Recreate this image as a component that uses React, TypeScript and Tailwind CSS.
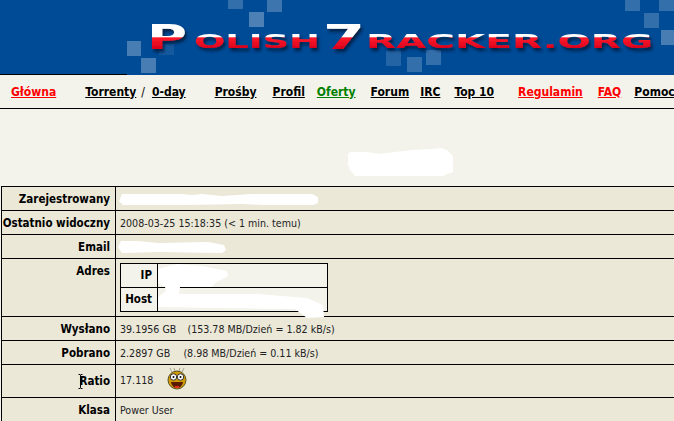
import type { ReactNode } from 'react'

const font = { fontFamily: '"DejaVu Sans Condensed", "DejaVu Sans", sans-serif' }

const squares = [
  [127, 41, 14, 15, 0.28],
  [141, 58, 15, 15, 0.28],
  [159, 44, 15, 11, 0.08],
  [228, 0, 15, 9, 0.2],
  [249, 12, 15, 15, 0.3],
  [267, 0, 15, 12, 0.24],
  [386, 51, 15, 15, 0.14],
  [407, 57, 15, 15, 0.2],
  [426, 50, 15, 15, 0.2],
  [625, 0, 15, 11, 0.2],
  [644, 13, 15, 15, 0.2],
  [659, 0, 15, 11, 0.2],
  [661, 30, 13, 15, 0.28],
]

const Banner = () => (
  <svg width="674" height="75" className="block bg-[#004b96]">
    <defs>
      <linearGradient id="flag" gradientUnits="userSpaceOnUse" x1="0" y1="25" x2="0" y2="49">
        <stop offset="0.5" stopColor="#ffffff" />
        <stop offset="0.53" stopColor="#ff1a2a" />
        <stop offset="1" stopColor="#d8001c" />
      </linearGradient>
      <filter id="shade" x="-5%" y="-30%" width="110%" height="170%">
        <feDropShadow dx="2" dy="3" stdDeviation="1.5" floodColor="#001a40" floodOpacity="0.9" />
      </filter>
    </defs>
    {squares.map(([x, y, w, h, o]) => (
      <rect key={`${x}-${y}`} x={x} y={y} width={w} height={h} fill="#ffffff" opacity={o} />
    ))}
    <g filter="url(#shade)" fill="url(#flag)" fontFamily="DejaVu Sans" fontWeight="700">
      <text x="147" y="49" fontSize="33" textLength="40" lengthAdjust="spacingAndGlyphs">P</text>
      <text x="194" y="48" fontSize="20" textLength="126" lengthAdjust="spacingAndGlyphs">OLISH</text>
      <text x="323" y="49" fontSize="33" textLength="42" lengthAdjust="spacingAndGlyphs">7</text>
      <text x="366" y="48" fontSize="20" textLength="287" lengthAdjust="spacingAndGlyphs">RACKER.ORG</text>
    </g>
    <rect x="0" y="74" width="127" height="1" fill="#000000" />
  </svg>
)

const NavLink = ({ label, color = 'text-black', className = '' }: { label: string; color?: string; className?: string }) => (
  <a href="#" className={`font-bold underline ${color} ${className}`}>
    {label}
  </a>
)

const Nav = () => (
  <nav className="flex h-[34px] items-center overflow-hidden whitespace-nowrap border-b border-black bg-[#f3f3eb] text-[12px]">
    <NavLink label="Główna" color="text-[#ff0000]" className="ml-[11px]" />
    <NavLink label="Torrenty" className="ml-[29px]" />
    <span className="ml-[5px] mr-[7px] text-black">/</span>
    <NavLink label="0-day" />
    <NavLink label="Prośby" className="ml-[29px]" />
    <NavLink label="Profil" className="ml-[16px]" />
    <NavLink label="Oferty" color="text-[#008000]" className="ml-[12px]" />
    <NavLink label="Forum" className="ml-[15px]" />
    <NavLink label="IRC" className="ml-[11px]" />
    <NavLink label="Top 10" className="ml-[14px]" />
    <NavLink label="Regulamin" color="text-[#ff0000]" className="ml-[24px]" />
    <NavLink label="FAQ" color="text-[#ff0000]" className="ml-[15px]" />
    <NavLink label="Pomoc" className="ml-[13px]" />
  </nav>
)

const Row = ({ label, height, labelPad = 'pt-[5px]', cursor, children }: { label: string; height: string; labelPad?: string; cursor?: ReactNode; children?: ReactNode }) => (
  <div className={`flex border-b border-black ${height}`}>
    <div className={`relative w-[114px] shrink-0 whitespace-nowrap border-r border-black pr-[5px] text-right text-[11.5px] font-bold leading-[15px] text-black ${labelPad}`}>
      {label}
      {cursor}
    </div>
    <div className="relative flex-1 pl-[4px] pt-[5px] text-[10.6px] leading-[15px] text-[#222222]">{children}</div>
  </div>
)

const Blob = ({ d, w, h, className }: { d: string; w: number; h: number; className: string }) => (
  <svg width={w} height={h} className={`absolute ${className}`}>
    <path d={d} fill="#ffffff" />
  </svg>
)

// text cursor left sitting on the Ratio label
const IBeam = () => (
  <svg width="5" height="15" className="absolute left-[76px] top-[9px]">
    <path d="M0.5 0.5h1.5l.5 1 .5-1h1.5M2.5 1.5v12M0.5 14.5h1.5l.5-1 .5 1h1.5" stroke="#000000" strokeWidth="1" fill="none" />
  </svg>
)

const Smiley = () => (
  <svg width="20" height="24" viewBox="0 0 20 24" className="absolute left-[51px] top-[2px]">
    <path d="M5 5 3 1M8 4 7 1M12 4l1-3M15 5l2-4" stroke="#a5a58f" strokeWidth="1" fill="none" />
    <circle cx="10" cy="13" r="9" fill="#cf9a00" stroke="#5f5326" />
    <circle cx="6.5" cy="10" r="3.2" fill="#ffffff" stroke="#333333" />
    <circle cx="13.5" cy="10" r="3.2" fill="#ffffff" stroke="#333333" />
    <circle cx="6.5" cy="10" r="1" fill="#000000" />
    <circle cx="13.5" cy="10" r="1" fill="#000000" />
    <path d="M4 15h12c-1 5-4 6-6 6s-5-1-6-6z" fill="#5a1a00" />
    <path d="M8 19h4v2H8z" fill="#e03020" />
  </svg>
)

const App = () => {
  return (
    <div className="h-[421px] w-[674px] overflow-hidden bg-[#f3f3eb]" style={font}>
      <Banner />
      <Nav />
      <div className="relative h-[77px]">
        <Blob
          className="left-[347px] top-[39px]"
          w={107}
          h={30}
          d="M1 6 3 4 20 4 32 6 48 4 66 2 84 1 94 0 100 2 106 8 106 24 100 26 96 28 8 28 3 22 1 16z"
        />
      </div>
      <div className="ml-[1px] border-l border-t border-black bg-[#ebe8d8]">
        <Row label="Zarejestrowany" height="h-[24px]">
          <Blob className="left-[3px] top-[6px]" w={200} h={15} d="M3 1h60l10 1 10-1 20 2 30-2 60 0 6 3 0 6-5 2-50 0-20-1-60 1-60 0-4-4z" />
        </Row>
        <Row label="Ostatnio widoczny" height="h-[24px]">
          2008-03-25 15:18:35 (&lt; 1 min. temu)
        </Row>
        <Row label="Email" height="h-[24px]">
          <Blob className="left-[2px] top-[5px]" w={110} h={14} d="M3 1 20 1 40 3 90 2 106 5 108 10 104 13 40 12 4 13 0 7z" />
        </Row>
        <Row label="Adres" height="h-[58px]">
          <div className="mt-[-1px] w-[208px] border border-black bg-[#f3f3eb]">
            <div className="flex h-[24px] border-b border-black">
              <div className="w-[37px] border-r border-black pr-[5px] pt-[4px] text-right text-[11.5px] font-bold leading-[15px] text-black">IP</div>
            </div>
            <div className="flex h-[23px]">
              <div className="w-[37px] border-r border-black pr-[5px] pt-[4px] text-right text-[11.5px] font-bold leading-[15px] text-black">Host</div>
            </div>
          </div>
          <Blob
            className="left-[41px] top-[4px]"
            w={175}
            h={56}
            d="M1 6 20 1 45 3 70 8 71 13 58 20 55 24 23 24 22 31 100 31 150 35 166 42 167 54 150 55 138 46 60 45 1 44 1 34 9 28 8 24 1 20z"
          />
        </Row>
        <Row label="Wysłano" height="h-[24px]">
          39.1956 GB &nbsp;&nbsp;<span className="ml-[2px]">(153.78 MB/Dzień = 1.82 kB/s)</span>
        </Row>
        <Row label="Pobrano" height="h-[24px]">
          2.2897 GB &nbsp;&nbsp;<span className="ml-[4px]">(8.98 MB/Dzień = 0.11 kB/s)</span>
        </Row>
        <Row label="Ratio" height="h-[33px]" labelPad="pt-[9px]" cursor={<IBeam />}>
          <span className="mt-[3px] block">17.118</span>
          <Smiley />
        </Row>
        <Row label="Klasa" height="h-[24px]">
          Power User
        </Row>
      </div>
    </div>
  )
}

export default App
